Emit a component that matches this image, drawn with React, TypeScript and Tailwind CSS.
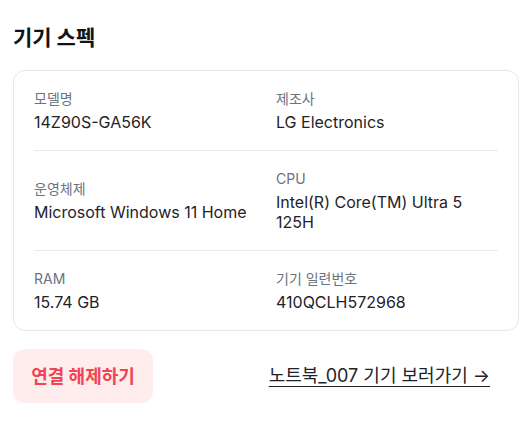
const specs = [
  [
    { label: '모델명', value: '14Z90S-GA56K' },
    { label: '제조사', value: 'LG Electronics' },
  ],
  [
    { label: '운영체제', value: 'Microsoft Windows 11 Home' },
    { label: 'CPU', value: 'Intel(R) Core(TM) Ultra 5 125H' },
  ],
  [
    { label: 'RAM', value: '15.74 GB' },
    { label: '기기 일련번호', value: '410QCLH572968' },
  ],
];

function SpecItem({ label, value }: { label: string; value: string }) {
  return (
    <div className="flex flex-col">
      <span className="text-[14px] leading-[19px] text-[#6b7280]">{label}</span>
      <span className="mt-1 text-[16px] leading-[20px] text-[#1f2329]">{value}</span>
    </div>
  );
}

export default function App() {
  return (
    <div
      className="min-h-screen bg-white px-[13px] pt-6"
      style={{ fontFamily: 'Inter, "Noto Sans CJK KR", sans-serif' }}
    >
      <h2 className="text-[21px] font-bold leading-7 text-[#111318] mb-[18px]">기기 스펙</h2>

      <div className="rounded-xl border border-[#e6e8ec] px-5">
        {specs.map((row, i) => (
          <div
            key={i}
            className={`grid grid-cols-2 items-center gap-5 py-[18px] ${
              i < specs.length - 1 ? 'border-b border-[#e8eaee]' : ''
            }`}
          >
            {row.map((item) => (
              <SpecItem key={item.label} label={item.label} value={item.value} />
            ))}
          </div>
        ))}
      </div>

      <div className="mt-[18px] flex items-center justify-between">
        <button className="flex h-[54px] w-[140px] items-center justify-center rounded-xl bg-[#ffecec] text-[18px] font-bold text-[#ef4455]">
          연결 해제하기
        </button>
        <a
          href="#"
          className="mr-[29px] text-[18px] leading-6 text-[#1f2329] underline underline-offset-4"
        >
          노트북_007 기기 보러가기 →
        </a>
      </div>
    </div>
  );
}
